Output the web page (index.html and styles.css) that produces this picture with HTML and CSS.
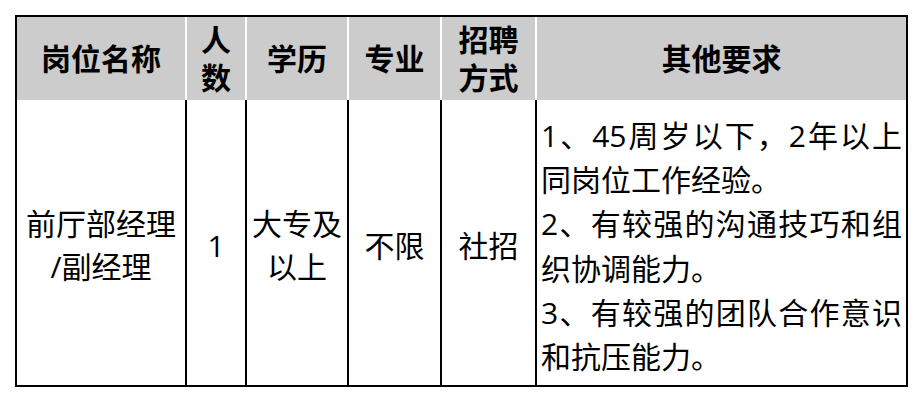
FILE: index.html
```html
<!DOCTYPE html>
<html lang="zh-CN">
<head>
<meta charset="utf-8">
<title>招聘岗位</title>
<link rel="stylesheet" href="styles.css">
</head>
<body>
<div class="sheet" role="table">
  <div class="th first" role="columnheader">岗位名称</div>
  <div class="th" role="columnheader">人<br>数</div>
  <div class="th" role="columnheader">学历</div>
  <div class="th" role="columnheader">专业</div>
  <div class="th" role="columnheader">招聘<br>方式</div>
  <div class="th" role="columnheader">其他要求</div>

  <div class="td first" role="cell">前厅部经理<br>/副经理</div>
  <div class="td" role="cell">1</div>
  <div class="td" role="cell">大专及<br>以上</div>
  <div class="td" role="cell">不限</div>
  <div class="td" role="cell">社招</div>
  <div class="td req" role="cell">
    <p class="line full">1、45周岁以下，2年以上</p>
    <p class="line">同岗位工作经验。</p>
    <p class="line full">2、有较强的沟通技巧和组</p>
    <p class="line">织协调能力。</p>
    <p class="line full">3、有较强的团队合作意识</p>
    <p class="line">和抗压能力。</p>
  </div>
</div>
</body>
</html>
```

FILE: styles.css
```css
html, body {
  margin: 0;
  padding: 0;
  background: #ffffff;
}

body {
  font-family: "Open Sans", "Noto Sans CJK SC", sans-serif;
  color: #000000;
  font-size: 30px;
}

.sheet {
  margin: 15px 0 0 15px;
  width: 893px;
  box-sizing: border-box;
  border: 2px solid #000000;
  display: grid;
  grid-template-columns: 168px 60px 102px 93px 95px 371px;
  grid-template-rows: 83px 285px;
}

.th {
  background: #cccccc;
  font-weight: bold;
  line-height: 38px;
  display: flex;
  align-items: center;
  justify-content: center;
  text-align: center;
  border-left: 2px solid #ffffff;
}

.td {
  line-height: 43px;
  display: flex;
  align-items: center;
  justify-content: center;
  text-align: center;
  border-left: 2px solid #000000;
  padding-top: 5px;
  box-sizing: border-box;
}

.th.first,
.td.first {
  border-left: none;
}

.td.req {
  flex-direction: column;
  align-items: stretch;
  justify-content: center;
  padding: 8px 4px 0 4px;
  line-height: 44.3px;
  text-align: left;
}

.line {
  margin: 0;
  white-space: nowrap;
}

.line.full {
  text-align: justify;
  text-align-last: justify;
}
```
